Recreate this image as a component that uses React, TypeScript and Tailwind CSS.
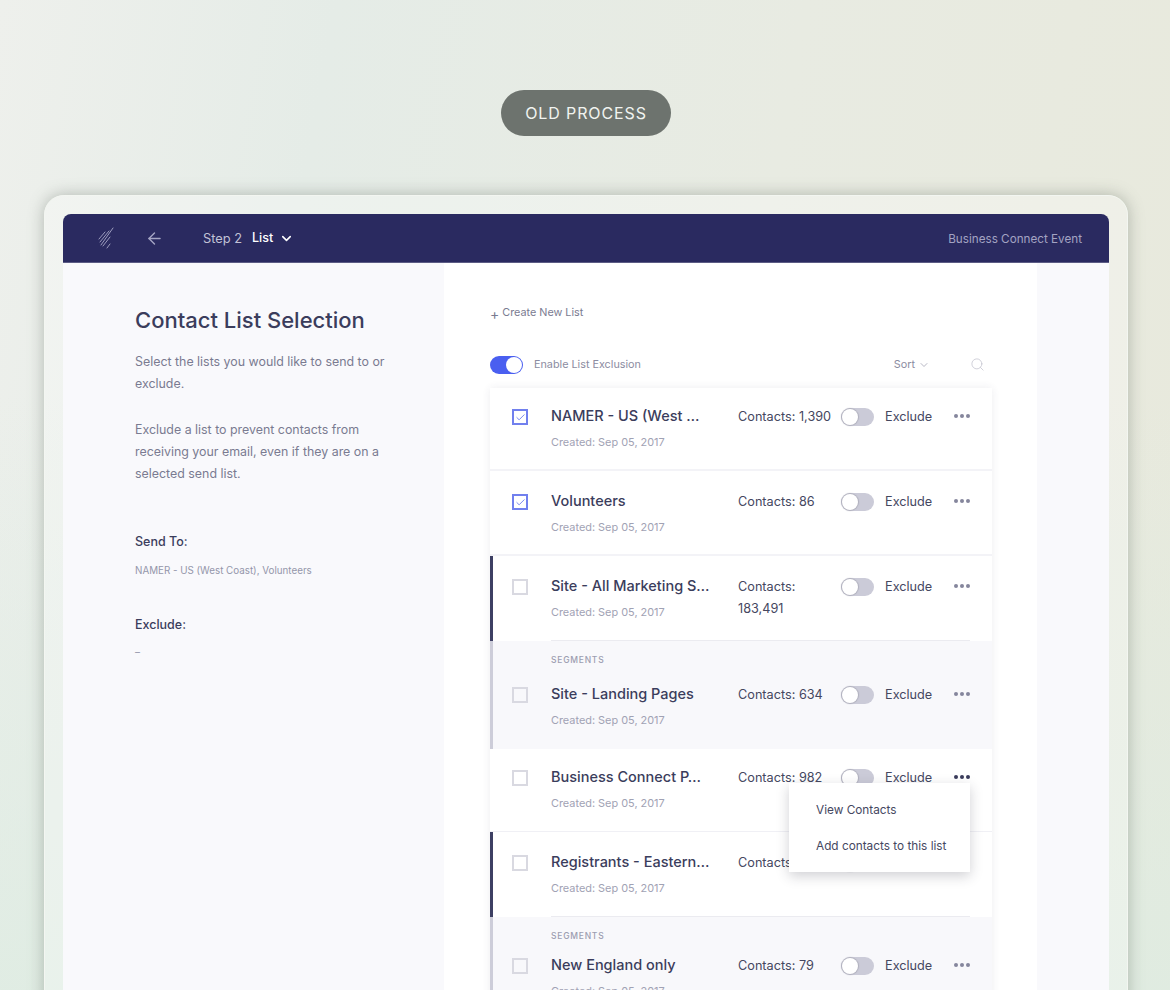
import { ArrowLeft, Check, ChevronDown, Search } from "lucide-react";

type Row = {
  name: string;
  contacts: string;
  checked?: boolean;
  top: string;
  bar?: "parent" | "segment";
  divider?: boolean;
  label?: boolean;
};

const rows: Row[] = [
  { name: "NAMER - US (West …", contacts: "Contacts: 1,390", checked: true, top: "pt-[17px] h-[83px] border-b-2 border-[#f3f3f7]" },
  { name: "Volunteers", contacts: "Contacts: 86", checked: true, top: "pt-[19px] h-[85px] border-b-2 border-[#f3f3f7]" },
  { name: "Site - All Marketing S…", contacts: "Contacts: 183,491", top: "pt-[19px] h-[85px]", bar: "parent", divider: true },
  { name: "Site - Landing Pages", contacts: "Contacts: 634", top: "pt-[42px] h-[108px]", bar: "segment", label: true },
  { name: "Business Connect P…", contacts: "Contacts: 982", top: "pt-[17px] h-[83px] border-b border-[#f0f0f5]" },
  { name: "Registrants - Eastern…", contacts: "Contacts: 1,204", top: "pt-[19px] h-[85px]", bar: "parent", divider: true },
  { name: "New England only", contacts: "Contacts: 79", top: "pt-[37px] h-[108px]", bar: "segment", label: true },
];

function Toggle({ on }: { on?: boolean }) {
  return (
    <div className={`flex h-[18px] w-[33px] shrink-0 items-center rounded-full ${on ? "justify-end bg-[#4a5ff0]" : "justify-start bg-[#cbcbd8]"}`}>
      <div className={`h-[16px] w-[16px] rounded-full bg-white ${on ? "mr-[1px]" : "ml-[1px] shadow-[0_0_1px_1px_#afafbc]"}`} />
    </div>
  );
}

function Dots({ dark }: { dark?: boolean }) {
  const dot = `h-[4px] w-[4px] rounded-full ${dark ? "bg-[#3a3c5c]" : "bg-[#85869c]"}`;
  return (
    <div className="flex gap-[2px]">
      <span className={dot} />
      <span className={dot} />
      <span className={dot} />
    </div>
  );
}

function ListRow({ row, active }: { row: Row; active?: boolean }) {
  const bg = row.bar === "segment" ? "bg-[#f8f8fb]" : "bg-white";
  const bar =
    row.bar === "parent" ? "bg-[#3d3f63]" : row.bar === "segment" ? "bg-[#cdcdd9]" : "bg-transparent";
  return (
    <div className={`relative shrink-0 ${bg} ${row.top}`}>
      <div className={`absolute bottom-0 left-0 top-0 w-[3px] ${bar}`} />
      {row.label && (
        <div className="absolute left-[61px] top-[14px] text-[8.5px] font-medium leading-[10px] tracking-[0.09em] text-[#9c9db0]">
          SEGMENTS
        </div>
      )}
      <div className="flex items-start">
        <div className="ml-[22px] mt-[4px] w-[39px] shrink-0">
          <div className={`flex h-[16px] w-[16px] items-center justify-center border-2 ${row.checked ? "border-[#7180ee]" : "border-[#d9d9e1]"}`}>
            {row.checked && <Check size={11} strokeWidth={1.75} className="text-[#5b6cec]" />}
          </div>
        </div>
        <div className="w-[187px] shrink-0">
          <div className="text-[14.5px] font-medium leading-[22px] text-[#3b3d5c]">{row.name}</div>
          <div className="mt-[4px] text-[10.9px] leading-[22px] text-[#a1a2b4]">Created: Sep 05, 2017</div>
        </div>
        <div className="mt-[1px] w-[103px] shrink-0 pr-[8px] text-[12.7px] leading-[22px] text-[#45475f]">{row.contacts}</div>
        <div className="mt-[3px]">
          <Toggle />
        </div>
        <div className="ml-[11px] mt-[1px] w-[69px] shrink-0 text-[12.7px] leading-[22px] text-[#45475f]">Exclude</div>
        <div className="mt-[2px] flex h-[18px] items-center">
          <Dots dark={active} />
        </div>
      </div>
      {row.divider && <div className="absolute bottom-0 left-[61px] right-[22px] h-px bg-[#ebebf0]" />}
    </div>
  );
}

export default function App() {
  return (
    <div className="h-[990px] overflow-hidden bg-[linear-gradient(to_bottom,rgba(222,236,226,0)_40%,rgba(222,236,226,0.8)_100%),linear-gradient(100deg,#eef0ec_0%,#e5ece7_25%,#e8ebe2_60%,#e8e9dc_100%)] font-['Inter',sans-serif]">
      <div className="flex justify-center pl-[2px] pt-[90px]">
        <div className="flex h-[46px] w-[170px] items-center justify-center rounded-full bg-[#6d736e] text-[16px] tracking-[0.055em] text-[#f1f3f0]">
          OLD PROCESS
        </div>
      </div>

      <div className="ml-[44px] mt-[59px] h-[900px] w-[1084px] rounded-[20px] border border-[#f3f6f1] bg-white/30 px-[18px] pt-[18px] shadow-[0_0_16px_rgba(90,100,90,0.4)]">
        <header className="flex h-[49px] items-center rounded-t-[8px] border-b border-[#5c5c85] bg-[#2a2a60] pr-[27px]">
          <svg width="16" height="22" viewBox="0 0 16 22" className="ml-[35px] text-[#9c9cbd]" fill="none" stroke="currentColor" strokeWidth="1" strokeLinecap="round">
            <path d="M1 12 L7 5" />
            <path d="M2 15 L11 4" />
            <path d="M3 18 L15 1" />
            <path d="M5 19 L12 10" />
            <path d="M9 21 L12 17" />
          </svg>
          <ArrowLeft size={19} strokeWidth={1.75} className="ml-[31px] text-[#a5a5c4]" />
          <span className="ml-[39px] mt-[1px] text-[12.8px] text-[#c2c2d6]">Step 2</span>
          <span className="ml-[10px] mt-[1px] text-[12.5px] font-medium text-white">List</span>
          <ChevronDown size={15} strokeWidth={2.5} className="ml-[6px] text-white" />
          <span className="ml-auto mt-[3px] text-[11.7px] text-[#a3a3c2]">Business Connect Event</span>
        </header>

        <div className="flex h-[800px] bg-[#f9f9fc]">
          <aside className="w-[381px] shrink-0 pl-[72px] pt-[41px]">
            <h1 className="text-[22px] font-medium leading-[32px] text-[#3b3d5c]">Contact List Selection</h1>
            <p className="mt-[15px] w-[270px] text-[12.4px] leading-[22px] text-[#7a7b91]">
              Select the lists you would like to send to or exclude.
            </p>
            <p className="mt-[24px] w-[255px] text-[12.4px] leading-[22px] text-[#7a7b91]">
              Exclude a list to prevent contacts from receiving your email, even if they are on a selected send list.
            </p>
            <div className="mt-[46px] text-[12.5px] font-medium leading-[22px] text-[#3b3d5c]">Send To:</div>
            <div className="mt-[7px] text-[9.8px] leading-[22px] text-[#9496aa]">NAMER - US (West Coast), Volunteers</div>
            <div className="mt-[32px] text-[12.5px] font-medium leading-[22px] text-[#3b3d5c]">Exclude:</div>
            <div className="mt-[5px] text-[10px] leading-[22px] text-[#9496aa]">–</div>
          </aside>

          <main className="w-[593px] shrink-0 bg-white pl-[46px] pt-[41px]">
            <div className="flex h-[18px] items-center text-[10.8px] text-[#7a7b91]">
              <span className="mr-[3px] mt-[2px] text-[14px] leading-none">+</span>Create New List
            </div>
            <div className="mt-[34px] flex h-[18px] w-[495px] items-center">
              <Toggle on />
              <span className="ml-[11px] text-[10.8px] text-[#8b8ca1]">Enable List Exclusion</span>
              <span className="ml-auto text-[10.8px] text-[#8b8ca1]">Sort</span>
              <ChevronDown size={12} strokeWidth={1.25} className="ml-[3px] text-[#8b8ca1]" />
              <Search size={15} strokeWidth={1.25} className="-mt-[1px] ml-[40px] text-[#c4c4d0]" />
            </div>

            <div className="relative mt-[14px] flex w-[502px] flex-col shadow-[0_0_8px_rgba(60,60,90,0.09)]">
              {rows.map((row, i) => (
                <ListRow key={row.name} row={row} active={i === 4} />
              ))}
              <div className="absolute left-[299px] top-[395px] h-[89px] w-[181px] bg-white pl-[27px] pt-[16px] text-[11.8px] leading-[22px] text-[#45475f] shadow-[0_4px_12px_rgba(40,40,60,0.22)]">
                <div>View Contacts</div>
                <div className="mt-[14px]">Add contacts to this list</div>
              </div>
            </div>
          </main>
        </div>
      </div>
    </div>
  );
}
